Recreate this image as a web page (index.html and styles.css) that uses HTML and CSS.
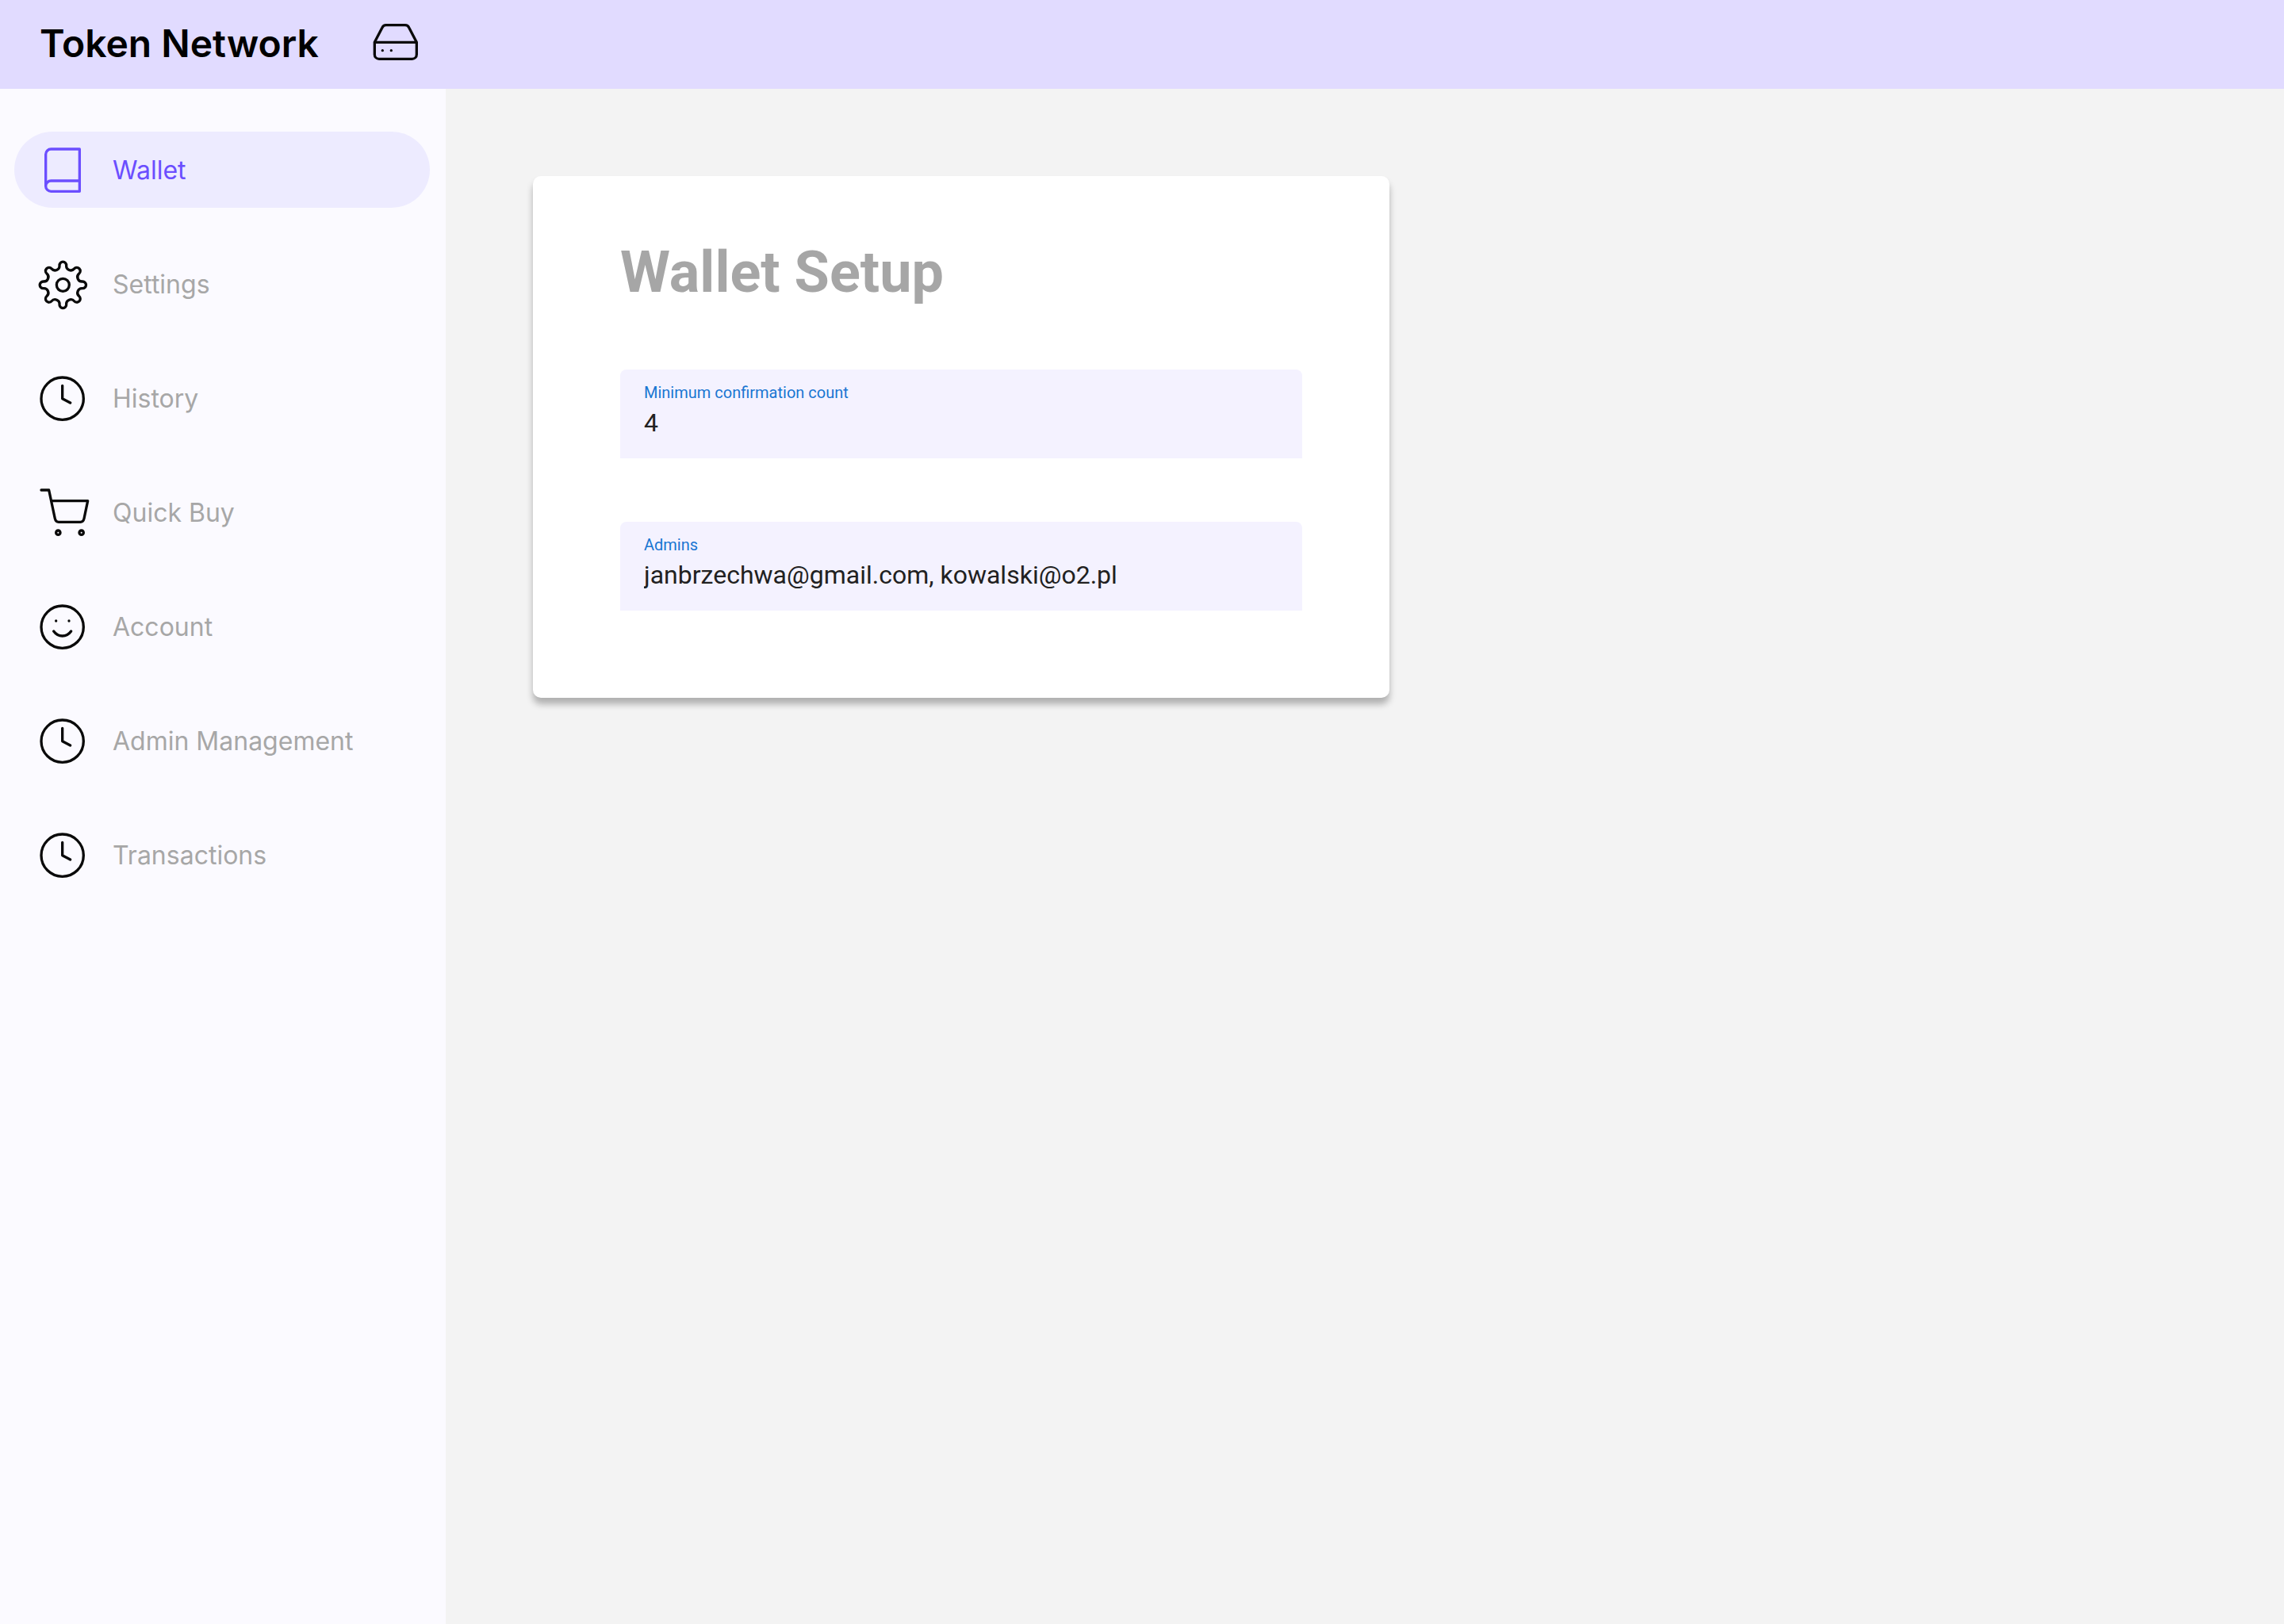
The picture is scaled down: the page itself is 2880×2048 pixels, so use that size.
FILE: index.html
```html
<!DOCTYPE html>
<html lang="en">
<head>
<meta charset="utf-8">
<meta name="viewport" content="width=device-width, initial-scale=1">
<title>Token Network</title>
<link rel="stylesheet" href="styles.css">
</head>
<body>
<svg class="sprite" aria-hidden="true">
  <symbol id="clock" viewBox="0 0 21 21">
    <circle cx="10.4" cy="10.4" r="8"/>
    <path d="M10.4 5.5v4.9l3 1.6"/>
  </symbol>
</svg>
<header class="topbar">
  <span class="brand">Token Network</span>
  <svg class="icon" viewBox="0 0 21 21" aria-hidden="true">
    <path d="M2.5 9.7h15.9v4.6a1.7 1.7 0 0 1-1.7 1.7H4.2a1.7 1.7 0 0 1-1.7-1.7zL5.4 4.1a1.6 1.6 0 0 1 1.4-.9h7.3a1.6 1.6 0 0 1 1.4.9l2.9 5.6"/>
    <circle class="dot" cx="5.5" cy="12.8" r=".5"/>
    <circle class="dot" cx="8.8" cy="12.8" r=".5"/>
  </svg>
</header>
<div class="layout">
  <nav class="sidebar" aria-label="Main">
    <a class="nav-item active" href="#wallet" aria-current="page">
      <svg class="icon" viewBox="0 0 21 21" aria-hidden="true">
        <path d="M4.1 16.4V4.4a2 2 0 0 1 2-2h10.8v16H6.1a2 2 0 0 1 0-4h10.8"/>
      </svg>
      Wallet
    </a>
    <a class="nav-item" href="#settings">
      <svg class="icon" viewBox="0 0 21 21" aria-hidden="true">
        <g transform="translate(.1 -.2)">
          <path d="M9.204 3.447A1.3 1.3 0 1 1 11.796 3.447A1.7 1.7 0 0 0 14.782 4.684A1.3 1.3 0 1 1 16.616 6.518A1.7 1.7 0 0 0 17.853 9.504A1.3 1.3 0 1 1 17.853 12.096A1.7 1.7 0 0 0 16.616 15.082A1.3 1.3 0 1 1 14.782 16.916A1.7 1.7 0 0 0 11.796 18.153A1.3 1.3 0 1 1 9.204 18.153A1.7 1.7 0 0 0 6.218 16.916A1.3 1.3 0 1 1 4.384 15.082A1.7 1.7 0 0 0 3.147 12.096A1.3 1.3 0 1 1 3.147 9.504A1.7 1.7 0 0 0 4.384 6.518A1.3 1.3 0 1 1 6.218 4.684A1.7 1.7 0 0 0 9.204 3.447z"/>
          <circle cx="10.5" cy="10.8" r="2.4"/>
        </g>
      </svg>
      Settings
    </a>
    <a class="nav-item" href="#history">
      <svg class="icon" aria-hidden="true"><use href="#clock"/></svg>
      History
    </a>
    <a class="nav-item" href="#quick-buy">
      <svg class="icon" viewBox="0 0 21 21" aria-hidden="true">
        <path d="M2.4 1.8h2.9l2.3 10.8q.3 1.3 1.4 1.3h8.2q1.1 0 1.4-1.3l1.4-6.7H6.2"/>
        <circle cx="8.8" cy="17.9" r=".8"/>
        <circle cx="17.6" cy="17.9" r=".8"/>
      </svg>
      Quick Buy
    </a>
    <a class="nav-item" href="#account">
      <svg class="icon" viewBox="0 0 21 21" aria-hidden="true">
        <circle cx="10.4" cy="10.4" r="8"/>
        <path d="M7.1 12q1.3 1.8 3.3 1.8t3.3-1.8"/>
        <circle class="dot" cx="8" cy="8.1" r=".5"/>
        <circle class="dot" cx="12.9" cy="8.1" r=".5"/>
      </svg>
      Account
    </a>
    <a class="nav-item" href="#admin-management">
      <svg class="icon" aria-hidden="true"><use href="#clock"/></svg>
      Admin Management
    </a>
    <a class="nav-item" href="#transactions">
      <svg class="icon" aria-hidden="true"><use href="#clock"/></svg>
      Transactions
    </a>
  </nav>
  <main class="content">
    <form class="card">
      <h1 class="card-title">Wallet Setup</h1>
      <div class="fields">
        <div class="field">
          <label class="field-label" for="confirmations">Minimum confirmation count</label>
          <input class="field-input" id="confirmations" type="text" inputmode="numeric" value="4">
        </div>
        <div class="field">
          <label class="field-label" for="admins">Admins</label>
          <input class="field-input" id="admins" type="text" value="janbrzechwa@gmail.com, kowalski@o2.pl">
        </div>
      </div>
    </form>
  </main>
</div>
</body>
</html>
```
FILE: styles.css
```css
* {
  box-sizing: border-box;
}

body {
  margin: 0;
  min-height: 100vh;
  display: flex;
  flex-direction: column;
  background: #f3f3f3;
  font-family: Inter, "Liberation Sans", sans-serif;
}

.sprite {
  display: none;
}

.icon {
  flex: none;
  width: 70px;
  height: 70px;
  fill: none;
  stroke: #0a0a0a;
  stroke-width: 1;
  stroke-linecap: round;
  stroke-linejoin: round;
}

.icon .dot {
  fill: #0a0a0a;
  stroke: none;
}

.topbar {
  display: flex;
  align-items: center;
  gap: 62px;
  height: 112px;
  padding: 0 50px;
  background: #e1dbff;
}

.brand {
  color: #000;
  font-size: 48px;
  font-weight: 600;
  line-height: 58px;
  padding-bottom: 2px;
}

.layout {
  flex: 1;
  display: flex;
}

.sidebar {
  flex: none;
  width: 562px;
  display: flex;
  flex-direction: column;
  gap: 48px;
  padding: 54px 20px 54px 18px;
  background: #fbfaff;
}

.nav-item {
  display: flex;
  align-items: center;
  gap: 28px;
  height: 96px;
  padding: 2px 26px 0;
  border-radius: 48px;
  color: #a7a7a7;
  font-size: 32px;
  line-height: 40px;
  text-decoration: none;
}

.nav-item.active {
  background: #edebff;
  color: #6b4eff;
}

.nav-item.active .icon {
  stroke: #6b4eff;
}

.content {
  flex: 1;
  padding: 110px;
}

.card {
  max-width: 1080px;
  padding: 80px 110px 110px;
  border-radius: 10px;
  background: #fff;
  box-shadow: 0 8px 8px rgba(0, 0, 0, 0.28);
  font-family: Roboto, "Liberation Sans", sans-serif;
}

.card-title {
  margin: 0 0 80px;
  color: #a6a6a6;
  font-size: 72px;
  font-weight: 700;
  line-height: 84px;
}

.fields {
  display: flex;
  flex-direction: column;
  gap: 80px;
}

.field {
  display: flex;
  flex-direction: column;
  height: 112px;
  padding: 16px 20px;
  border-radius: 8px 8px 0 0;
  background: #f4f2ff;
}

.field-label {
  padding: 0 10px;
  color: #1976d2;
  font-size: 20px;
  line-height: 26px;
}

.field-input {
  width: 100%;
  height: 50px;
  padding: 0 10px;
  border: 0;
  outline: 0;
  background: none;
  color: #212121;
  font-family: inherit;
  font-size: 32px;
  line-height: 50px;
}
```
